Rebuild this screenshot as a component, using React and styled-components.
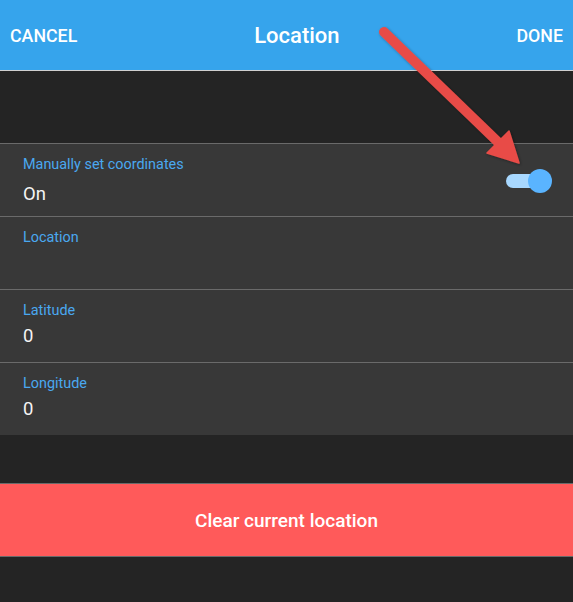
import React from 'react';
import styled, { createGlobalStyle } from 'styled-components';

const GlobalStyle = createGlobalStyle`
  html, body {
    margin: 0;
    padding: 0;
    background: #242424;
    font-family: Roboto, "Liberation Sans", sans-serif;
  }
`;

const Screen = styled.div`
  position: relative;
  width: 573px;
  height: 602px;
  background: #242424;
  overflow: hidden;
`;

const Header = styled.header`
  height: 70px;
  background: #36a4ec;
  border-bottom: 1px solid #d0d0d0;
  display: flex;
  justify-content: space-between;
  align-items: center;
  padding: 0 10px;
`;

const HeaderButton = styled.span`
  color: #fff;
  font-size: 17.8px;
  font-weight: 500;
`;

const Title = styled.h1`
  margin: 0;
  color: #fff;
  font-size: 22px;
  font-weight: 500;
`;

const Spacer = styled.div`
  height: ${(p) => p.$h}px;
`;

const List = styled.div`
  background: #383838;
`;

const Row = styled.div`
  height: 72px;
  border-top: 1px solid #6a6a6a;
  padding: 0 23px;
  display: flex;
  align-items: flex-start;
  justify-content: space-between;
`;

const RowText = styled.div`
  display: flex;
  flex-direction: column;
  padding-top: 12px;
`;

const Label = styled.span`
  color: #4aa8f0;
  font-size: 14.4px;
  line-height: 17px;
`;

const Value = styled.span`
  color: #f4f4f4;
  font-size: 18.5px;
  line-height: 22px;
  margin-top: ${(p) => (p.$wide ? 10 : 6)}px;
  min-height: 22px;
`;

const Toggle = styled.div`
  position: relative;
  width: 48px;
  height: 26px;
  margin-top: 24px;
  margin-right: -2px;
`;

const Track = styled.div`
  position: absolute;
  left: 2px;
  top: 6px;
  width: 36px;
  height: 14px;
  border-radius: 7px;
  background: #a8d8ff;
`;

const Knob = styled.div`
  position: absolute;
  right: 0;
  top: 1px;
  width: 24px;
  height: 24px;
  border-radius: 50%;
  background: #5ab4ff;
`;

const ClearButton = styled.button`
  display: block;
  width: 100%;
  height: 74px;
  margin: 0;
  border: none;
  border-top: 1px solid #6a6a6a;
  border-bottom: 1px solid #6a6a6a;
  background: #ff5a5a;
  color: #fff;
  font-family: inherit;
  font-size: 19px;
  font-weight: 500;
`;

const Arrow = styled.svg`
  position: absolute;
  left: 0;
  top: 0;
  pointer-events: none;
`;

const rows = [
  { label: 'Manually set coordinates', value: 'On', toggle: true },
  { label: 'Location', value: '' },
  { label: 'Latitude', value: '0' },
  { label: 'Longitude', value: '0' },
];

export default function App() {
  return (
    <Screen>
      <GlobalStyle />
      <Header>
        <HeaderButton>CANCEL</HeaderButton>
        <Title>Location</Title>
        <HeaderButton>DONE</HeaderButton>
      </Header>
      <Spacer $h={72} />
      <List>
        {rows.map((row) => (
          <Row key={row.label}>
            <RowText>
              <Label>{row.label}</Label>
              <Value $wide={row.toggle}>{row.value}</Value>
            </RowText>
            {row.toggle && (
              <Toggle>
                <Track />
                <Knob />
              </Toggle>
            )}
          </Row>
        ))}
      </List>
      <Spacer $h={48} />
      <ClearButton>Clear current location</ClearButton>
      <Arrow width="573" height="602" viewBox="0 0 573 602">
        <defs>
          <filter id="sh" x="-20%" y="-20%" width="140%" height="140%">
            <feDropShadow dx="1" dy="1" stdDeviation="1.5" floodColor="#000" floodOpacity="0.35" />
          </filter>
        </defs>
        <g filter="url(#sh)" fill="#e84c47" stroke="#e84c47">
          <line x1="384" y1="32" x2="500" y2="144" strokeWidth="10" strokeLinecap="round" />
          <polygon points="487,153 509,131 519,163" strokeWidth="1.5" strokeLinejoin="round" />
        </g>
      </Arrow>
    </Screen>
  );
}
